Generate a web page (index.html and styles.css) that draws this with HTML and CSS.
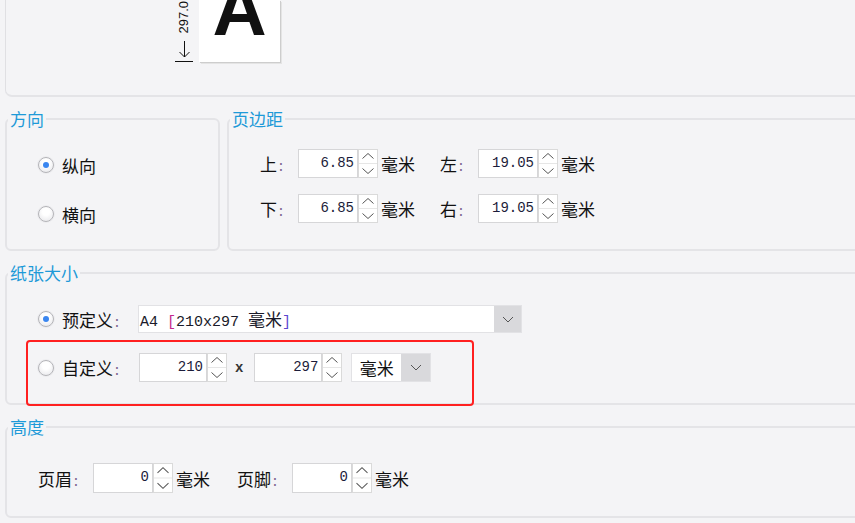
FILE: index.html
```html
<!DOCTYPE html>
<html lang="zh-CN">
<head>
  <meta charset="UTF-8">
  <title>页面设置</title>
  <link rel="stylesheet" href="styles.css">
</head>
<body>

<div class="page">

  <div class="preview">
    <div class="dim">
      <span class="dim-text">297.0</span>
      <svg class="dim-arrow" width="18" height="22" viewBox="0 0 18 22">
        <path d="M9.5 1V17M4.5 12 9.5 17 14.5 12M0 21.5H18" fill="none" stroke="#111" stroke-width="1"/>
      </svg>
    </div>
    <div class="paper"><span class="paper-a">A</span></div>
  </div>

  <div class="groups-row">
    <fieldset class="group group-orient">
      <legend>方向</legend>
      <div class="radio-row"><span class="radio checked"></span><span>纵向</span></div>
      <div class="radio-row"><span class="radio"></span><span>横向</span></div>
    </fieldset>

    <fieldset class="group group-margin">
      <legend>页边距</legend>
      <div class="field-row">
        <div class="field">
          <span class="lbl">上<i>:</i></span>
          <span class="num">6.85</span>
          <svg class="spin" viewBox="0 0 20 29" preserveAspectRatio="none"><rect x="0.5" y="0.5" width="19" height="28" fill="#fff" stroke="#dadada"/><path d="M1 14.5H19" stroke="#e6e6e6"/><path d="M4.5 9.5 10 4.5 15.5 9.5M4.5 19.5 10 24.5 15.5 19.5" fill="none" stroke="#555"/></svg>
          <span class="unit">毫米</span>
        </div>
        <div class="field">
          <span class="lbl">左<i>:</i></span>
          <span class="num">19.05</span>
          <svg class="spin" viewBox="0 0 20 29" preserveAspectRatio="none"><rect x="0.5" y="0.5" width="19" height="28" fill="#fff" stroke="#dadada"/><path d="M1 14.5H19" stroke="#e6e6e6"/><path d="M4.5 9.5 10 4.5 15.5 9.5M4.5 19.5 10 24.5 15.5 19.5" fill="none" stroke="#555"/></svg>
          <span class="unit">毫米</span>
        </div>
      </div>
      <div class="field-row">
        <div class="field">
          <span class="lbl">下<i>:</i></span>
          <span class="num">6.85</span>
          <svg class="spin" viewBox="0 0 20 29" preserveAspectRatio="none"><rect x="0.5" y="0.5" width="19" height="28" fill="#fff" stroke="#dadada"/><path d="M1 14.5H19" stroke="#e6e6e6"/><path d="M4.5 9.5 10 4.5 15.5 9.5M4.5 19.5 10 24.5 15.5 19.5" fill="none" stroke="#555"/></svg>
          <span class="unit">毫米</span>
        </div>
        <div class="field">
          <span class="lbl">右<i>:</i></span>
          <span class="num">19.05</span>
          <svg class="spin" viewBox="0 0 20 29" preserveAspectRatio="none"><rect x="0.5" y="0.5" width="19" height="28" fill="#fff" stroke="#dadada"/><path d="M1 14.5H19" stroke="#e6e6e6"/><path d="M4.5 9.5 10 4.5 15.5 9.5M4.5 19.5 10 24.5 15.5 19.5" fill="none" stroke="#555"/></svg>
          <span class="unit">毫米</span>
        </div>
      </div>
    </fieldset>
  </div>

  <fieldset class="group group-paper">
    <legend>纸张大小</legend>
    <div class="opt-row">
      <span class="radio checked"></span>
      <span class="opt-lbl">预定义<i>:</i></span>
      <div class="select">
        <span class="select-text">A4 <b class="br1">[</b>210x297 <span class="cjk">毫米</span><b class="br2">]</b></span>
        <span class="select-btn">
          <svg width="12" height="7" viewBox="0 0 12 7"><path d="M1 1 6 6 11 1" fill="none" stroke="#555"/></svg>
        </span>
      </div>
    </div>
    <div class="custom-box">
      <div class="opt-row custom-row">
        <span class="radio"></span>
        <span class="opt-lbl">自定义<i>:</i></span>
        <span class="num num-wide">210</span>
        <svg class="spin" viewBox="0 0 20 29" preserveAspectRatio="none"><rect x="0.5" y="0.5" width="19" height="28" fill="#fff" stroke="#dadada"/><path d="M1 14.5H19" stroke="#e6e6e6"/><path d="M4.5 9.5 10 4.5 15.5 9.5M4.5 19.5 10 24.5 15.5 19.5" fill="none" stroke="#555"/></svg>
        <span class="times">x</span>
        <span class="num num-wide">297</span>
        <svg class="spin" viewBox="0 0 20 29" preserveAspectRatio="none"><rect x="0.5" y="0.5" width="19" height="28" fill="#fff" stroke="#dadada"/><path d="M1 14.5H19" stroke="#e6e6e6"/><path d="M4.5 9.5 10 4.5 15.5 9.5M4.5 19.5 10 24.5 15.5 19.5" fill="none" stroke="#555"/></svg>
        <div class="unit-select">
          <span class="unit-select-text">毫米</span>
          <span class="select-btn">
            <svg width="12" height="7" viewBox="0 0 12 7"><path d="M1 1 6 6 11 1" fill="none" stroke="#555"/></svg>
          </span>
        </div>
      </div>
    </div>
  </fieldset>

  <fieldset class="group group-height">
    <legend>高度</legend>
    <div class="field-row">
      <div class="field field-hf">
        <span class="lbl lbl-wide">页眉<i>:</i></span>
        <span class="num">0</span>
        <svg class="spin" viewBox="0 0 20 29" preserveAspectRatio="none"><rect x="0.5" y="0.5" width="19" height="28" fill="#fff" stroke="#dadada"/><path d="M1 14.5H19" stroke="#e6e6e6"/><path d="M4.5 9.5 10 4.5 15.5 9.5M4.5 19.5 10 24.5 15.5 19.5" fill="none" stroke="#555"/></svg>
        <span class="unit">毫米</span>
      </div>
      <div class="field field-hf">
        <span class="lbl lbl-wide">页脚<i>:</i></span>
        <span class="num">0</span>
        <svg class="spin" viewBox="0 0 20 29" preserveAspectRatio="none"><rect x="0.5" y="0.5" width="19" height="28" fill="#fff" stroke="#dadada"/><path d="M1 14.5H19" stroke="#e6e6e6"/><path d="M4.5 9.5 10 4.5 15.5 9.5M4.5 19.5 10 24.5 15.5 19.5" fill="none" stroke="#555"/></svg>
        <span class="unit">毫米</span>
      </div>
    </div>
  </fieldset>

</div>

</body>
</html>
```

FILE: styles.css
```css
body {
  margin: 0;
  background-color: #f4f4f6;
  font-family: "Noto Sans CJK SC", sans-serif;
  font-size: 17px;
  color: #111;
  overflow: hidden;
}
.page {
  width: 880px;
  padding-left: 5px;
}

/* paper preview on top */
.preview {
  height: 97px;
  box-sizing: border-box;
  border-left: 1px solid #e0e0e3;
  border-bottom: 2px solid #e4e4e7;
  border-bottom-left-radius: 7px;
  display: flex;
  align-items: flex-start;
  padding-left: 169px;
}
.dim {
  width: 18px;
  height: 62px;
  display: flex;
  flex-direction: column;
  align-items: center;
  justify-content: flex-end;
}
.dim-text {
  writing-mode: vertical-rl;
  transform: rotate(180deg);
  font-family: "Liberation Sans", sans-serif;
  font-size: 13px;
  line-height: 14px;
  margin-bottom: 6px;
}
.dim-arrow {
  display: block;
}
.paper {
  width: 81px;
  height: 62px;
  margin-left: 6px;
  background: #fff;
  box-shadow: 1px 1px 0 #cdcdcd, 2px 2px 0 #e4e4e4;
  overflow: hidden;
  display: flex;
  justify-content: center;
  align-items: flex-end;
}
.paper-a {
  font-family: "Liberation Sans", sans-serif;
  font-weight: bold;
  font-size: 75px;
  line-height: 1;
  padding-bottom: 15px;
}

/* groups */
.groups-row {
  display: flex;
  gap: 7px;
  margin-top: 13px;
}
.group {
  margin: 0;
  padding: 0 0 0 31px;
  border: 2px solid #e4e4e7;
  border-radius: 6px;
  min-width: 0;
}
.group legend {
  color: #1e9ad8;
  font-size: 17px;
  line-height: 18px;
  padding: 0 2px;
  margin-left: -30px;
}
.group-orient {
  width: 215px;
  box-sizing: border-box;
  padding-top: 22px;
  padding-bottom: 20px;
}
.group-margin {
  flex: 1;
  padding-top: 21px;
}
.group-paper {
  margin-top: 13px;
  padding-top: 23px;
}
.group-height {
  margin-top: 13px;
  padding-top: 27px;
  padding-bottom: 23px;
}

/* radios */
.radio-row {
  display: flex;
  align-items: center;
  gap: 8px;
  height: 30px;
}
.radio-row + .radio-row {
  margin-top: 19px;
}
.radio {
  width: 16px;
  height: 16px;
  box-sizing: border-box;
  border-radius: 50%;
  border: 1px solid #b4b4b8;
  background: radial-gradient(circle at 50% 35%, #ffffff 30%, #e4e4e8 100%);
  box-shadow: 0 0 0 1px #ececef;
  display: flex;
  align-items: center;
  justify-content: center;
  flex: none;
}
.radio.checked::after {
  content: "";
  width: 6px;
  height: 6px;
  border-radius: 50%;
  background: #3a86f0;
}

/* label + number + spin + unit */
.field-row {
  display: flex;
  gap: 25px;
}
.field-row + .field-row {
  margin-top: 16px;
}
.field {
  display: flex;
  align-items: center;
  height: 29px;
}
.lbl {
  width: 38px;
  flex: none;
}
.lbl-wide {
  width: 55px;
}
i {
  font-style: normal;
  color: #7a5c8c;
  font-size: 14px;
  padding-left: 2px;
}
.num {
  width: 60px;
  height: 29px;
  box-sizing: border-box;
  background: #fff;
  border: 1px solid #d6d6d8;
  text-align: right;
  padding-right: 3px;
  font-family: "Liberation Mono", monospace;
  font-size: 14px;
  line-height: 27px;
  color: #1c1c3a;
  flex: none;
}
.num-wide {
  width: 68px;
}
.spin {
  display: block;
  width: 20px;
  height: 29px;
  flex: none;
}
.unit {
  margin-left: 3px;
}
.group-height .field-row {
  gap: 27px;
}
.field-hf {
  height: 30px;
}
.field-hf .num, .field-hf .spin {
  height: 30px;
}

/* paper size rows */
.opt-row {
  display: flex;
  align-items: center;
  height: 28px;
}
.opt-row .radio {
  margin-right: 8px;
}
.opt-lbl {
  width: 76px;
  flex: none;
}
.select {
  display: flex;
  width: 384px;
  height: 28px;
  box-sizing: border-box;
  border: 1px solid #e2e2e5;
  background: #fff;
}
.select-text {
  flex: 1;
  padding-left: 1px;
  font-family: "Liberation Mono", monospace;
  font-size: 15px;
  line-height: 26px;
  color: #1a1a2a;
}
.select-text b {
  font-weight: normal;
}
.br1 {
  color: #c4288e;
}
.br2 {
  color: #5a48d0;
}
.cjk {
  font-family: "Noto Sans CJK SC", sans-serif;
  font-size: 17px;
}
.select-btn {
  width: 27px;
  background: #d9d9dc;
  display: flex;
  align-items: center;
  justify-content: center;
}
.custom-box {
  margin: 7px 0 -3px -12px;
  width: 448px;
  height: 66px;
  box-sizing: border-box;
  border: 2px solid #ff2020;
  border-radius: 4px;
  padding: 11px 0 0 10px;
}
.custom-row {
  height: 29px;
}
.custom-row .opt-lbl {
  width: 77px;
}
.times {
  font-family: "Liberation Mono", monospace;
  font-size: 14px;
  font-weight: bold;
  color: #333;
  margin: 0 11px 0 8px;
}
.unit-select {
  display: flex;
  width: 80px;
  height: 29px;
  margin-left: 9px;
  background: #fff;
  border: 1px solid #e2e2e5;
  box-sizing: border-box;
}
.unit-select-text {
  width: 50px;
  text-align: center;
  line-height: 27px;
}
.unit-select .select-btn {
  width: 30px;
}
```
